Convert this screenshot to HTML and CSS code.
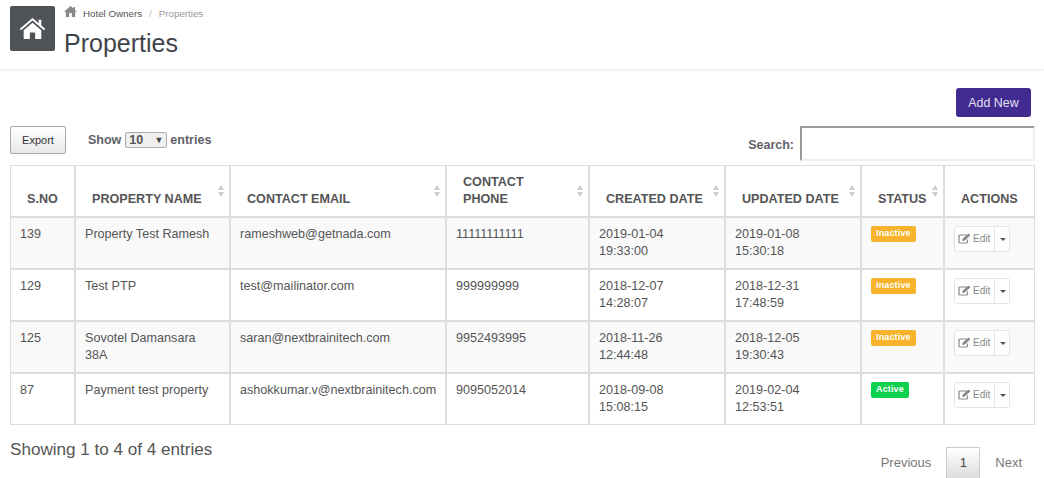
FILE: index.html

```html
<!DOCTYPE html>
<html lang="en">
<head>
    <meta charset="UTF-8">
    <title>Properties</title>
    <link rel="stylesheet" href="styles.css">
</head>
<body>
    <div class="page-header">
        <div class="page-icon">
            <svg width="27" height="22" viewBox="0 0 30 25"><path d="M15 1 L22 7 V3 H25 V9.6 L29.5 13.4 L28 15 L15 4 L2 15 L.5 13.4 Z M15 6.5 L25 15 V25 H18 V17.5 H12 V25 H5 V15 Z" fill="#fff"/></svg>
        </div>
        <div class="page-title">
            <div class="breadcrumb">
                <svg class="crumb-home" width="13" height="11" viewBox="0 0 13 11"><path d="M6.500 0 L9.500 2.600 V1 H11 V3.900 L13 5.700 H11.200 V11 H7.800 V7 H5.200 V11 H1.800 V5.700 H0 Z" fill="#888"/></svg>
                <a class="crumb-link">Hotel Owners</a>
                <span class="crumb-sep">/</span>
                <span class="crumb-current">Properties</span>
            </div>
            <h1>Properties</h1>
        </div>
    </div>

    <div class="content">
        <div class="add-row">
            <button class="btn-add">Add New</button>
        </div>
        <div class="toolbar">
            <button class="btn-export">Export</button>
            <div class="length">
                Show
                <span class="fake-select">10<i>&#9660;</i></span>
                entries
            </div>
            <div class="search">
                <label>Search:</label>
                <input type="text">
            </div>
        </div>

        <table class="data-table">
            <thead>
                <tr>
                    <th class="col-no">S.NO</th>
                    <th class="col-name sorting">PROPERTY NAME</th>
                    <th class="col-email sorting">CONTACT EMAIL</th>
                    <th class="col-phone sorting">CONTACT<br>PHONE</th>
                    <th class="col-date sorting">CREATED DATE</th>
                    <th class="col-date sorting">UPDATED DATE</th>
                    <th class="col-status sorting">STATUS</th>
                    <th class="col-actions">ACTIONS</th>
                </tr>
            </thead>
            <tbody>
                <tr>
                    <td>139</td>
                    <td>Property Test Ramesh</td>
                    <td>rameshweb@getnada.com</td>
                    <td>11111111111</td>
                    <td>2019-01-04<br>19:33:00</td>
                    <td>2019-01-08<br>15:30:18</td>
                    <td><span class="label inactive">Inactive</span></td>
                    <td>
                        <div class="edit-group">
                            <span class="edit-btn">
                                <svg width="13" height="11" viewBox="0 0 13 11"><path d="M9 2 H2 Q1 2 1 3 V9 Q1 10 2 10 H8.500 Q9.500 10 9.500 9 V6.500" fill="none" stroke="#888" stroke-width="1.200"/><path d="M4.500 5.800 L10.500 .5 L12.500 2.300 L6.500 7.800 L4.300 8 Z" fill="#888"/></svg>
                                Edit
                            </span>
                            <span class="edit-caret"></span>
                        </div>
                    </td>
                </tr>
                <tr>
                    <td>129</td>
                    <td>Test PTP</td>
                    <td>test@mailinator.com</td>
                    <td>999999999</td>
                    <td>2018-12-07<br>14:28:07</td>
                    <td>2018-12-31<br>17:48:59</td>
                    <td><span class="label inactive">Inactive</span></td>
                    <td>
                        <div class="edit-group">
                            <span class="edit-btn">
                                <svg width="13" height="11" viewBox="0 0 13 11"><path d="M9 2 H2 Q1 2 1 3 V9 Q1 10 2 10 H8.500 Q9.500 10 9.500 9 V6.500" fill="none" stroke="#888" stroke-width="1.200"/><path d="M4.500 5.800 L10.500 .5 L12.500 2.300 L6.500 7.800 L4.300 8 Z" fill="#888"/></svg>
                                Edit
                            </span>
                            <span class="edit-caret"></span>
                        </div>
                    </td>
                </tr>
                <tr>
                    <td>125</td>
                    <td>Sovotel Damansara<br>38A</td>
                    <td>saran@nextbrainitech.com</td>
                    <td>9952493995</td>
                    <td>2018-11-26<br>12:44:48</td>
                    <td>2018-12-05<br>19:30:43</td>
                    <td><span class="label inactive">Inactive</span></td>
                    <td>
                        <div class="edit-group">
                            <span class="edit-btn">
                                <svg width="13" height="11" viewBox="0 0 13 11"><path d="M9 2 H2 Q1 2 1 3 V9 Q1 10 2 10 H8.500 Q9.500 10 9.500 9 V6.500" fill="none" stroke="#888" stroke-width="1.200"/><path d="M4.500 5.800 L10.500 .5 L12.500 2.300 L6.500 7.800 L4.300 8 Z" fill="#888"/></svg>
                                Edit
                            </span>
                            <span class="edit-caret"></span>
                        </div>
                    </td>
                </tr>
                <tr>
                    <td>87</td>
                    <td>Payment test property</td>
                    <td>ashokkumar.v@nextbrainitech.com</td>
                    <td>9095052014</td>
                    <td>2018-09-08<br>15:08:15</td>
                    <td>2019-02-04<br>12:53:51</td>
                    <td><span class="label active">Active</span></td>
                    <td>
                        <div class="edit-group">
                            <span class="edit-btn">
                                <svg width="13" height="11" viewBox="0 0 13 11"><path d="M9 2 H2 Q1 2 1 3 V9 Q1 10 2 10 H8.500 Q9.500 10 9.500 9 V6.500" fill="none" stroke="#888" stroke-width="1.200"/><path d="M4.500 5.800 L10.500 .5 L12.500 2.300 L6.500 7.800 L4.300 8 Z" fill="#888"/></svg>
                                Edit
                            </span>
                            <span class="edit-caret"></span>
                        </div>
                    </td>
                </tr>
            </tbody>
        </table>

        <div class="table-footer">
            <div class="info">Showing 1 to 4 of 4 entries</div>
            <div class="pager">
                <span>Previous</span>
                <span class="current">1</span>
                <span>Next</span>
            </div>
        </div>
    </div>
</body>
</html>
```

FILE: styles.css

```css
body {
    font-family: "Liberation Sans", Arial, sans-serif;
    font-size: 13px;
    color: #555;
    margin: 0;
    padding: 0;
    background: #fff;
    overflow: hidden;
}
.page-header {
    display: flex;
    height: 70px;
    padding: 6px 10px 0;
    box-sizing: border-box;
    border-bottom: 1px solid #eee;
    box-shadow: 0 1px 2px rgba(0, 0, 0, 0.04);
}
.page-icon {
    width: 45px;
    height: 45px;
    padding-bottom: 2px;
    box-sizing: border-box;
    background: #4f5256;
    border-radius: 2px;
    display: flex;
    align-items: center;
    justify-content: center;
    margin-right: 9px;
}
.breadcrumb {
    display: flex;
    align-items: center;
    font-size: 9.750px;
    height: 14px;
}
.crumb-home {
    margin-right: 6px;
    margin-top: -3px;
}
.crumb-link {
    color: #555;
}
.crumb-sep {
    color: #bbb;
    margin: 0 7px;
}
.crumb-current {
    color: #999;
}
h1 {
    font-size: 25px;
    font-weight: normal;
    line-height: 30px;
    margin: 8px 0 0;
    color: #3f444b;
}
.content {
    padding: 0 9px 0 10px;
}
.add-row {
    display: flex;
    justify-content: flex-end;
    padding: 18px 4px 0 0;
}
.btn-add {
    width: 75px;
    height: 29px;
    background: #412a90;
    color: #e4e0f2;
    border: none;
    border-radius: 3px;
    font-family: inherit;
    font-size: 12.400px;
    padding: 0;
}
.toolbar {
    display: flex;
    height: 39px;
    margin-top: 9px;
    margin-bottom: 0;
    position: relative;
}
.btn-export {
    width: 56px;
    height: 28px;
    border: 1px solid #aaa;
    border-radius: 2px;
    background: linear-gradient(#fff, #e8e8e8);
    font-family: inherit;
    font-size: 11px;
    color: #333;
    padding: 0;
}
.length {
    margin-left: 22px;
    font-weight: bold;
    font-size: 12.500px;
    color: #5f6368;
    height: 28px;
    display: flex;
    align-items: center;
    gap: 4px;
}
.fake-select {
    width: 42px;
    height: 16px;
    margin-right: -1px;
    box-sizing: border-box;
    border: 1px solid #aaa;
    border-radius: 2px;
    background: #efefef;
    display: flex;
    justify-content: space-between;
    align-items: center;
    padding: 0 3px;
    color: #555;
}
.fake-select i {
    font-style: normal;
    font-size: 9px;
    color: #444;
}
.search {
    margin-left: auto;
    display: flex;
    align-items: center;
    height: 35px;
    font-size: 12.500px;
}
.search label {
    font-weight: bold;
    color: #5f6368;
    margin-right: 6px;
    margin-top: 2px;
}
.search input {
    width: 235px;
    height: 35px;
    box-sizing: border-box;
    border: 2px solid #eee;
    border-top-color: #999;
    border-left-color: #999;
    padding: 0;
    margin: 0;
    outline: none;
}
.data-table {
    width: 1025px;
    table-layout: fixed;
    border-collapse: separate;
    border-spacing: 0;
}
.data-table th,
.data-table td {
    border: 1px solid #ddd;
    text-align: left;
    box-sizing: border-box;
}
.data-table th {
    height: 52px;
    vertical-align: bottom;
    padding: 0 16px 8px;
    font-size: 12.600px;
    line-height: 17px;
    color: #555;
    font-weight: bold;
    white-space: nowrap;
}
.data-table td {
    height: 52px;
    vertical-align: top;
    padding: 7.500px 9px 0;
    line-height: 17.500px;
    font-size: 12.600px;
    white-space: nowrap;
}
.data-table tbody tr:nth-child(odd) td {
    background: #f9f9f9;
}
.col-no { width: 65px; }
.col-name { width: 155px; }
.col-email { width: 216px; }
.col-phone { width: 143px; }
.col-date { width: 136px; }
.col-status { width: 83px; }
.col-actions { width: 91px; }
.sorting {
    position: relative;
}
.sorting::before,
.sorting::after {
    content: "";
    position: absolute;
    right: 5px;
    border-left: 3.500px solid transparent;
    border-right: 3.500px solid transparent;
}
.sorting::before {
    top: 19px;
    border-bottom: 5px solid #ccc;
}
.sorting::after {
    top: 26px;
    border-top: 5px solid #ccc;
}
.label {
    display: inline-block;
    font-size: 9px;
    font-weight: bold;
    color: #fff;
    line-height: 15px;
    height: 16px;
    padding: 0 5px;
    border-radius: 2px;
    letter-spacing: 0.15px;
    vertical-align: top;
    margin-top: 0;
}
.inactive {
    background: #f7b32b;
}
.active {
    background: #0bd14f;
}
.edit-group {
    display: inline-flex;
    height: 26px;
    border: 1px solid #e4e4e4;
    border-radius: 3px;
    box-sizing: border-box;
    background: #fff;
    margin-top: 0;
    width: 56px;
}
.edit-btn {
    display: flex;
    align-items: center;
    gap: 2px;
    padding-left: 3px;
    width: 40px;
    box-sizing: border-box;
    border-right: 1px solid #e4e4e4;
    font-size: 10px;
    color: #888;
}
.edit-caret {
    flex: 1;
    position: relative;
}
.edit-caret::after {
    content: "";
    position: absolute;
    left: 5px;
    top: 11px;
    border-left: 3px solid transparent;
    border-right: 3px solid transparent;
    border-top: 3px solid #555;
}
.table-footer {
    display: flex;
    justify-content: space-between;
    padding-top: 15px;
}
.info {
    font-size: 17.100px;
    color: #555;
    line-height: 20px;
}
.pager {
    display: flex;
    align-items: center;
    font-size: 13px;
    color: #777;
    margin-top: 7px;
    margin-right: 1px;
}
.pager span {
    padding: 0 12px;
    line-height: 30px;
}
.pager .current {
    width: 34px;
    height: 32px;
    box-sizing: border-box;
    padding: 0;
    margin: 0 3px;
    text-align: center;
    color: #444;
    border: 1px solid #ccc;
    background: linear-gradient(#fff, #ddd);
}
```
